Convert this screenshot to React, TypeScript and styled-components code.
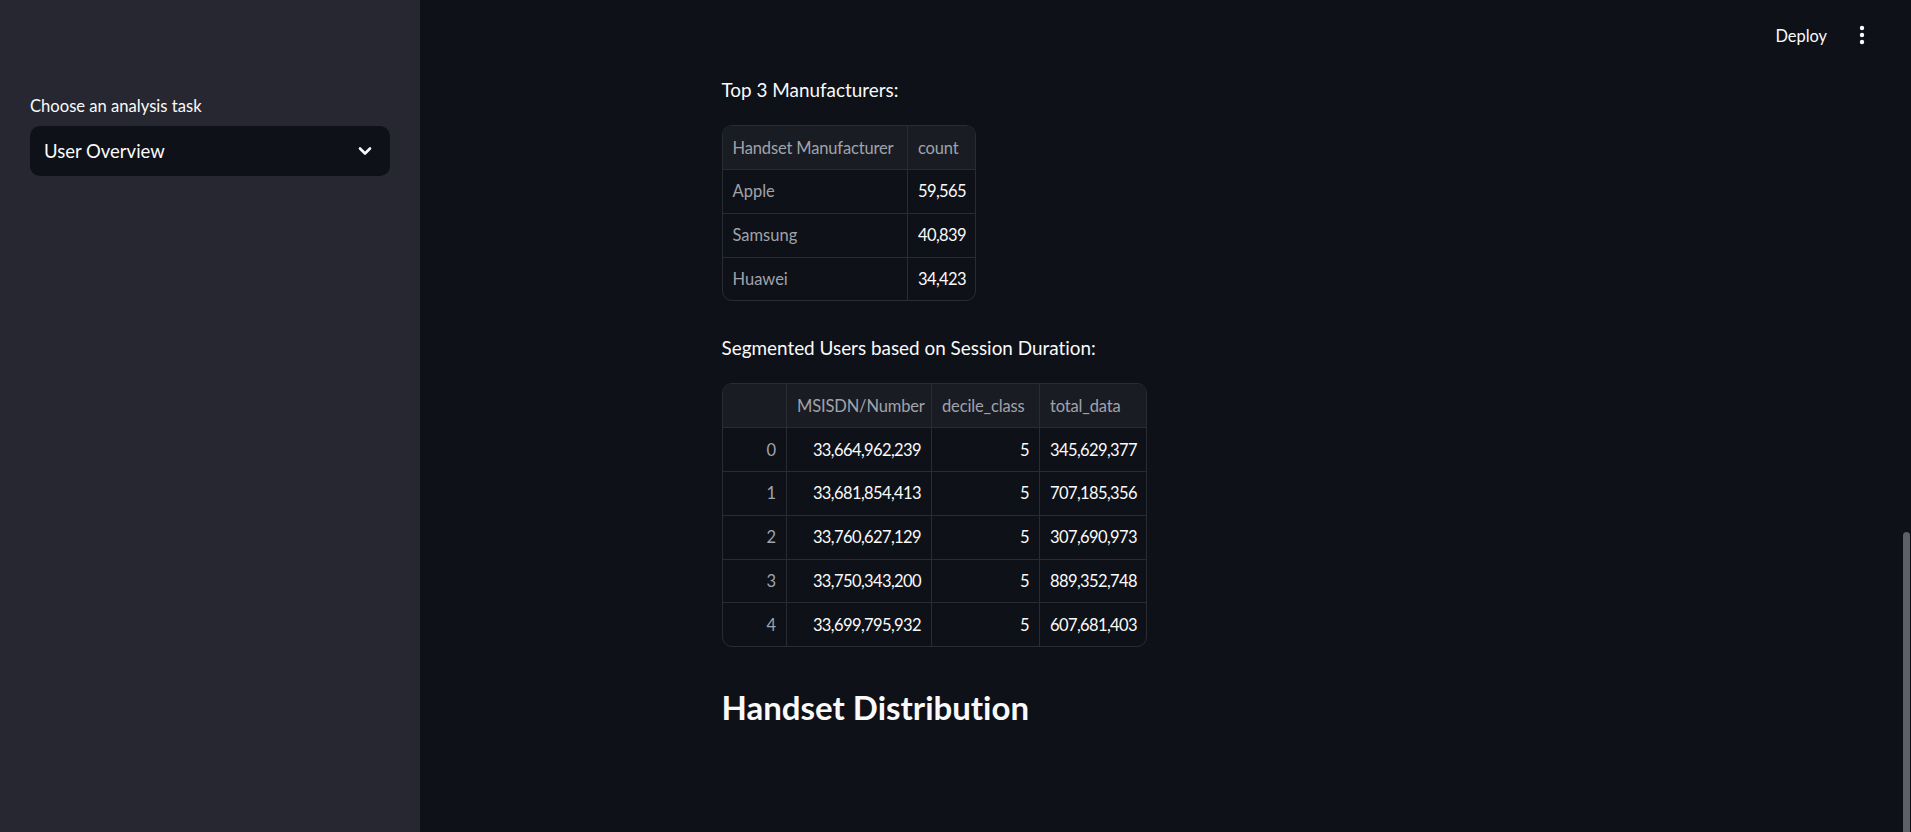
import React from "react";
import styled, { createGlobalStyle } from "styled-components";

const FONT = `"Source Sans Pro", Lato, "Noto Sans", sans-serif`;

const Global = createGlobalStyle`
  html, body { margin: 0; padding: 0; height: 100%; }
  body {
    background: #0e1117;
    color: #fafafa;
    font-family: ${FONT};
    font-variant-ligatures: none;
    overflow: hidden;
  }
  #root { height: 100%; }
`;

const Shell = styled.div`
  display: grid;
  grid-template-columns: 420px 1fr;
  width: 1911px;
  height: 832px;
  overflow: hidden;
`;

const Sidebar = styled.aside`
  background: #262730;
  padding: 95px 30px 0 30px;
  display: flex;
  flex-direction: column;
`;

const FieldLabel = styled.label`
  font-size: 16.6px;
  line-height: 22px;
  color: #fafafa;
  margin-bottom: 9px;
`;

const SelectBox = styled.div`
  height: 50px;
  border-radius: 10px;
  background: #0e1117;
  display: flex;
  align-items: center;
  justify-content: space-between;
  padding: 0 18px 0 14px;
  font-size: 18.5px;
  color: #fafafa;
`;

const MainArea = styled.main`
  display: grid;
  grid-template-columns: 1fr 8px;
  position: relative;
  min-width: 0;
`;

const Header = styled.header`
  position: absolute;
  top: 0;
  left: 0;
  right: 8px;
  height: 70px;
  display: flex;
  align-items: center;
  justify-content: flex-end;
  gap: 32px;
  padding-right: 38px;
`;

const DeployButton = styled.button`
  background: transparent;
  border: none;
  color: #fafafa;
  font-family: ${FONT};
  font-size: 16.4px;
  padding: 0;
  cursor: pointer;
`;

const MenuButton = styled.button`
  background: transparent;
  border: none;
  padding: 0;
  display: flex;
  color: #fafafa;
`;

const Content = styled.div`
  width: 880px;
  margin: 0 auto;
  padding-top: 74px;
  display: flex;
  flex-direction: column;
  align-items: flex-start;
`;

const Para = styled.p<{ $gap: number }>`
  margin: 0 0 ${(p) => p.$gap}px 0;
  font-size: 18.9px;
  line-height: 32px;
  color: #fafafa;
`;

const TableFrame = styled.div<{ $gap: number }>`
  border: 1px solid #2a2c34;
  border-radius: 10px;
  overflow: hidden;
  margin-bottom: ${(p) => p.$gap}px;
`;

const Table = styled.table<{ $w: number }>`
  width: ${(p) => p.$w}px;
  border-collapse: collapse;
  table-layout: fixed;
  font-size: 16.5px;
`;

const Col = styled.col<{ $w: number }>`
  width: ${(p) => p.$w}px;
`;

const Th = styled.th`
  height: 43px;
  background: #1a1c24;
  color: #a0a3ab;
  font-weight: 400;
  text-align: left;
  padding: 0 10px;
  white-space: nowrap;
  overflow: hidden;
  letter-spacing: -0.15px;
  border-right: 1px solid #2a2c34;
  border-bottom: 1px solid #2a2c34;
  &:last-child { border-right: none; }
`;

const Td = styled.td<{ $index?: boolean; $align?: "left" | "right" }>`
  height: 42.75px;
  padding: 0 10px;
  white-space: nowrap;
  overflow: hidden;
  color: ${(p) => (p.$index ? "#a0a3ab" : "#fafafa")};
  text-align: ${(p) => p.$align ?? "right"};
  letter-spacing: ${(p) => (p.$index ? "0" : "-0.6px")};
  border-right: 1px solid #2a2c34;
  border-bottom: 1px solid #2a2c34;
  &:last-child { border-right: none; }
  tr:last-child > & { border-bottom: none; }
`;

const Heading = styled.h2`
  margin: 0;
  font-size: 33px;
  font-weight: 700;
  line-height: 42px;
  color: #fafafa;
`;

const ScrollTrack = styled.div`
  display: flex;
  flex-direction: column;
  justify-content: flex-end;
`;

const ScrollThumb = styled.div`
  height: 300px;
  width: 7px;
  background: #5f6065;
  border-radius: 4px 4px 0 0;
`;

const manufacturers = [
  ["Apple", "59,565"],
  ["Samsung", "40,839"],
  ["Huawei", "34,423"],
];

const users = [
  ["0", "33,664,962,239", "5", "345,629,377"],
  ["1", "33,681,854,413", "5", "707,185,356"],
  ["2", "33,760,627,129", "5", "307,690,973"],
  ["3", "33,750,343,200", "5", "889,352,748"],
  ["4", "33,699,795,932", "5", "607,681,403"],
];

export default function App() {
  return (
    <>
      <Global />
      <Shell>
        <Sidebar>
          <FieldLabel>Choose an analysis task</FieldLabel>
          <SelectBox>
            <span>User Overview</span>
            <svg width="14" height="10" viewBox="0 0 14 10">
              <path d="M2 2.5 L7 7.5 L12 2.5" fill="none" stroke="#fafafa" strokeWidth="2.6" strokeLinecap="round" strokeLinejoin="round" />
            </svg>
          </SelectBox>
        </Sidebar>
        <MainArea>
          <Content>
            <Para $gap={19}>Top 3 Manufacturers:</Para>
            <TableFrame $gap={31}>
              <Table $w={252}>
                <colgroup>
                  <Col $w={185} />
                  <Col $w={67} />
                </colgroup>
                <thead>
                  <tr>
                    <Th>Handset Manufacturer</Th>
                    <Th>count</Th>
                  </tr>
                </thead>
                <tbody>
                  {manufacturers.map(([name, count]) => (
                    <tr key={name}>
                      <Td $index $align="left">{name}</Td>
                      <Td>{count}</Td>
                    </tr>
                  ))}
                </tbody>
              </Table>
            </TableFrame>
            <Para $gap={19}>Segmented Users based on Session Duration:</Para>
            <TableFrame $gap={39}>
              <Table $w={423}>
                <colgroup>
                  <Col $w={64} />
                  <Col $w={145} />
                  <Col $w={108} />
                  <Col $w={106} />
                </colgroup>
                <thead>
                  <tr>
                    <Th></Th>
                    <Th>MSISDN/Number</Th>
                    <Th>decile_class</Th>
                    <Th>total_data</Th>
                  </tr>
                </thead>
                <tbody>
                  {users.map((r) => (
                    <tr key={r[0]}>
                      <Td $index>{r[0]}</Td>
                      <Td>{r[1]}</Td>
                      <Td>{r[2]}</Td>
                      <Td>{r[3]}</Td>
                    </tr>
                  ))}
                </tbody>
              </Table>
            </TableFrame>
            <Heading>Handset Distribution</Heading>
          </Content>
          <ScrollTrack>
            <ScrollThumb />
          </ScrollTrack>
          <Header>
            <DeployButton>Deploy</DeployButton>
            <MenuButton aria-label="menu">
              <svg width="6" height="20" viewBox="0 0 6 20">
                <circle cx="3" cy="3" r="2.2" fill="#fafafa" />
                <circle cx="3" cy="10" r="2.2" fill="#fafafa" />
                <circle cx="3" cy="17" r="2.2" fill="#fafafa" />
              </svg>
            </MenuButton>
          </Header>
        </MainArea>
      </Shell>
    </>
  );
}
